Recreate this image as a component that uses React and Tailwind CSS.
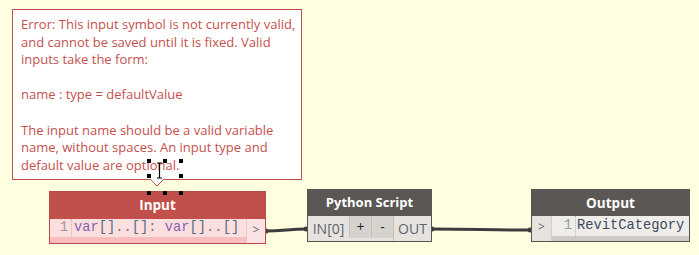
import React from "react";

const uiFont = { fontFamily: '"Open Sans", "Noto Sans", sans-serif' };
const monoFont = { fontFamily: '"Liberation Mono", "DejaVu Sans Mono", monospace' };

const Handle = ({ x, y }) => (
    <div className="absolute w-[4px] h-[4px] bg-black" style={{ left: x - 2, top: y - 2 }}></div>
);

const Wires = () => (
    <svg className="absolute left-0 top-0" width="699" height="255">
        {/* input -> python */}
        <path d="M265 231 C 285 231, 288 229, 307 229" stroke="#3d3d3d" strokeWidth="3" fill="none" />
        <circle cx="266" cy="231" r="2.5" fill="#3d3d3d" />
        <circle cx="306" cy="229" r="2.5" fill="#3d3d3d" />
        {/* python -> output */}
        <path d="M431 229 C 480 229, 482 230, 531 230" stroke="#3d3d3d" strokeWidth="3" fill="none" />
        <circle cx="432" cy="229" r="2.5" fill="#3d3d3d" />
        <circle cx="530" cy="230" r="2.5" fill="#3d3d3d" />
        {/* tooltip pointer */}
        <path d="M150 179 L157 186 L164 179" stroke="#c0504d" strokeWidth="1" fill="#fff" />
        {/* text cursor */}
        <path d="M157 163 L162 163 M159.5 163 L159.5 178 M157 178 L162 178" stroke="#000" strokeWidth="1.2" fill="none" />
    </svg>
);

const App = () => {
    return (
        <div className="relative w-[699px] h-[255px] overflow-hidden bg-[#fffee1]" style={uiFont}>
            {/* error tooltip */}
            <div className="absolute left-[12px] top-[9px] w-[290px] h-[171px] bg-white border border-[#c0504d] pl-[8px] pt-[6px] text-[13px] leading-[17.6px] text-[#c4514e] whitespace-nowrap">
                <p>Error: This input symbol is not currently valid,</p>
                <p>and cannot be saved until it is fixed. Valid</p>
                <p>inputs take the form:</p>
                <p>&nbsp;</p>
                <p>name : type = defaultValue</p>
                <p>&nbsp;</p>
                <p>The input name should be a valid variable</p>
                <p>name, without spaces. An input type and</p>
                <p>default value are optional.</p>
            </div>

            <Wires />

            {/* Input node */}
            <div className="absolute left-[49px] top-[191px] w-[217px] h-[53px] border border-[#b84a47] flex flex-col">
                <div className="h-[27px] bg-[#c1504d] flex items-center justify-center text-white font-bold text-[13.5px]">Input</div>
                <div className="flex flex-1">
                    <div className="flex-1 flex flex-col">
                        <div className="h-[18px] bg-[#fbdfdf] flex items-center" style={monoFont}>
                            <div className="w-[22px] h-full flex items-center justify-end pr-[3px] text-[13.75px] text-[#9a9a9a] border-r border-dotted border-[#c9b8b8]">1</div>
                            <div className="pl-[2px] text-[13.75px] whitespace-pre">
                                <span className="text-[#8a5fb3]">var</span>
                                <span className="text-[#566b86]">[]</span>
                                <span className="text-[#7a7a7a]">..</span>
                                <span className="text-[#566b86]">[]</span>
                                <span className="text-[#7a7a7a]">: </span>
                                <span className="text-[#8a5fb3]">var</span>
                                <span className="text-[#566b86]">[]</span>
                                <span className="text-[#7a7a7a]">..</span>
                                <span className="text-[#566b86]">[]</span>
                            </div>
                        </div>
                        <div className="flex-1 bg-[#f8bdbc]"></div>
                    </div>
                    <div className="w-[19px] bg-[#fce3e3] border-l border-[#e8c8c8] flex items-center justify-center text-[12px] text-[#666] pb-[3px]">&gt;</div>
                </div>
            </div>

            {/* Python Script node */}
            <div className="absolute left-[307px] top-[189px] w-[125px] h-[53px] border border-[#575451] flex flex-col">
                <div className="h-[26px] bg-[#5a5754] flex items-center justify-center text-white font-bold text-[13px]">Python Script</div>
                <div className="flex flex-1 bg-[#e6e3df] text-[14px] text-[#5f6470]">
                    <div className="w-[41px] flex items-center justify-center">IN[0]</div>
                    <div className="w-[22px] bg-[#d6d3ce] border-l border-[#c4c1bc] flex items-start justify-center text-[#222] mb-[3px]">+</div>
                    <div className="w-[22px] bg-[#d6d3ce] border-l border-[#c4c1bc] flex items-start justify-center text-[#222] mb-[3px]">-</div>
                    <div className="flex-1 border-l border-[#c4c1bc] flex items-center justify-center">OUT</div>
                </div>
            </div>

            {/* Output node */}
            <div className="absolute left-[531px] top-[189px] w-[159px] h-[53px] border border-[#575451] flex flex-col">
                <div className="h-[26px] bg-[#5a5754] flex items-center justify-center text-white font-bold text-[13.5px]">Output</div>
                <div className="flex flex-1">
                    <div className="w-[19px] bg-[#e6e3df] flex items-center justify-center text-[12px] text-[#666] pb-[3px]">&gt;</div>
                    <div className="flex-1 flex flex-col border-l border-[#d2cfca]">
                        <div className="h-[20px] bg-[#efede9] flex items-center" style={monoFont}>
                            <div className="w-[24px] h-full flex items-center justify-end pr-[3px] text-[13.75px] text-[#9a9a9a] border-r border-dotted border-[#bdbab5]">1</div>
                            <div className="pl-[1px] text-[13.75px] text-[#3d4a5c]">RevitCategory</div>
                        </div>
                        <div className="flex-1 bg-[#cdc9c4]"></div>
                    </div>
                </div>
            </div>

            {/* selection adorner around cursor */}
            <Handle x={149} y={161} />
            <Handle x={165} y={161} />
            <Handle x={181} y={161} />
            <Handle x={149} y={176} />
            <Handle x={181} y={176} />
            <Handle x={149} y={193} />
            <Handle x={165} y={193} />
            <Handle x={181} y={193} />
        </div>
    );
};

export default App;
